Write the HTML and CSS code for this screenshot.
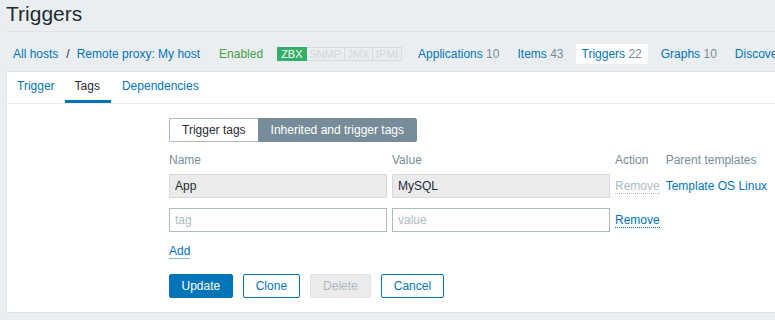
FILE: index.html
```html
<!DOCTYPE html>
<html lang="en">
<head>
  <meta charset="UTF-8">
  <title>Triggers</title>
  <link rel="stylesheet" href="styles.css">
</head>
<body>

  <header class="header-title">
    <h1>Triggers</h1>
  </header>

  <nav class="host-nav">
    <a href="#" class="link">All hosts</a>
    <span class="separator">/</span>
    <a href="#" class="link">Remote proxy: My host</a>
    <span class="status-green">Enabled</span>
    <span class="badges">
      <span class="badge badge-on">ZBX</span>
      <span class="badge">SNMP</span>
      <span class="badge">JMX</span>
      <span class="badge">IPMI</span>
    </span>
    <a href="#" class="nav-item">Applications <sup>10</sup></a>
    <a href="#" class="nav-item">Items <sup>43</sup></a>
    <a href="#" class="nav-item selected">Triggers <sup>22</sup></a>
    <a href="#" class="nav-item">Graphs <sup>10</sup></a>
    <a href="#" class="nav-item">Discovery rules <sup>3</sup></a>
  </nav>

  <div class="container">
    <ul class="tabs">
      <li><a href="#">Trigger</a></li>
      <li class="active"><a href="#">Tags</a></li>
      <li><a href="#">Dependencies</a></li>
    </ul>

    <div class="form">
      <div class="radio-segmented">
        <label>Trigger tags</label>
        <label class="checked">Inherited and trigger tags</label>
      </div>

      <div class="tags-table">
        <div class="th">Name</div>
        <div class="th">Value</div>
        <div class="th">Action</div>
        <div class="th parent">Parent templates</div>

        <input type="text" value="App" readonly>
        <input type="text" value="MySQL" readonly>
        <span class="btn-link disabled">Remove</span>
        <a href="#" class="link parent">Template OS Linux</a>

        <input type="text" placeholder="tag">
        <input type="text" placeholder="value">
        <span class="btn-link">Remove</span>
        <span></span>
      </div>

      <div class="add-row">
        <a href="#" class="add-link">Add</a>
      </div>

      <div class="buttons">
        <button class="btn-primary">Update</button>
        <button class="btn-alt">Clone</button>
        <button class="btn-alt" disabled>Delete</button>
        <button class="btn-alt">Cancel</button>
      </div>
    </div>
  </div>

</body>
</html>
```

FILE: styles.css
```css
body {
  margin: 0;
  font-family: "Liberation Sans", Arial, sans-serif;
  font-size: 12px;
  color: #1f2c33;
  background-color: #ebeef0;
  overflow: hidden;
  white-space: nowrap;
}
a {
  color: #0275b8;
  text-decoration: none;
}
.header-title {
  margin: 0 0 0 6px;
  padding: 1px 0 5px 0;
  border-bottom: 1px solid #dfe4e7;
}
.header-title h1 {
  margin: 0;
  font-size: 21px;
  font-weight: normal;
  line-height: 25px;
}
.host-nav {
  display: flex;
  align-items: center;
  height: 20px;
  padding: 12px 0 7px 13px;
  line-height: 20px;
}
.separator {
  margin: 0 7px 0 8px;
}
.status-green {
  margin-left: 19px;
  color: #429e47;
}
.badges {
  display: flex;
  margin: 0 4px 0 14px;
  font-size: 11px;
  line-height: 12px;
}
.badge {
  padding: 0 2.7px;
  color: #cfd7dc;
  border: 1px solid #d4dce0;
  border-left: none;
}
.badge-on {
  padding: 0 3px;
  color: #fff;
  background-color: #34af67;
  border: 1px solid #34af67;
}
.nav-item {
  padding: 0 6px;
  margin-left: 6px;
}
.nav-item sup {
  vertical-align: baseline;
  font-size: 12px;
  color: #768d99;
}
.nav-item.selected {
  background-color: #fff;
  margin-right: 1px;
}
.container {
  margin-left: 6px;
  background-color: #fff;
  border: 1px solid #dfe4e7;
  border-right: none;
  padding-bottom: 14px;
}
.tabs {
  display: flex;
  margin: 0;
  padding: 0;
  list-style: none;
  border-bottom: 1px solid #ebeef0;
}
.tabs li {
  padding: 0 10px;
  line-height: 28px;
  border-bottom: 3px solid transparent;
}
.tabs li.active {
  padding: 0 11px 0 10px;
  margin-right: 1px;
  border-bottom-color: #0275b8;
}
.tabs li.active a {
  color: #1f2c33;
}
.form {
  padding: 14px 0 0 162px;
}
.radio-segmented {
  display: flex;
}
.radio-segmented label {
  padding: 0 12px;
  line-height: 22px;
  border: 1px solid #acbbc2;
  background-color: #fff;
}
.radio-segmented label:first-child {
  border-radius: 2px 0 0 2px;
  border-right: none;
}
.radio-segmented label.checked {
  color: #fff;
  background-color: #768d99;
  border-color: #768d99;
  border-radius: 0 2px 2px 0;
}
.tags-table {
  display: grid;
  grid-template-columns: 218px 218px auto 1fr;
  column-gap: 5px;
  row-gap: 10px;
  align-items: center;
  margin-top: 10px;
}
.th {
  color: #768d99;
  line-height: 16px;
  margin-bottom: -4px;
}
.parent {
  margin-left: 1px;
}
.tags-table input {
  box-sizing: border-box;
  height: 24px;
  width: 218px;
  margin: 0;
  padding: 0 5px;
  font-family: inherit;
  font-size: 12px;
  color: #1f2c33;
  border: 1px solid #acbbc2;
  outline: none;
}
.tags-table input[readonly] {
  background-color: #ebebeb;
  border-color: #d3dbe0;
}
.tags-table input::placeholder {
  color: #acbbc2;
}
.btn-link {
  justify-self: start;
  color: #0275b8;
  line-height: 14px;
  border-bottom: 1px dotted #0275b8;
}
.btn-link.disabled {
  color: #acbbc2;
  border-bottom-color: #acbbc2;
}
.add-row {
  margin-top: 12px;
}
.add-link {
  display: inline-block;
  line-height: 14px;
  border-bottom: 1px solid rgba(2, 117, 184, 0.5);
}
.buttons {
  display: flex;
  gap: 10px;
  margin-top: 15px;
}
button {
  height: 24px;
  padding: 0 12px;
  font-family: inherit;
  font-size: 12px;
  border-radius: 2px;
  cursor: pointer;
}
.btn-primary {
  padding: 0 11.5px;
  color: #fff;
  background-color: #0275b8;
  border: 1px solid #0275b8;
}
.btn-alt {
  color: #0275b8;
  background-color: #fff;
  border: 1px solid #0275b8;
}
.btn-alt:disabled {
  color: #acbbc2;
  background-color: #ebebeb;
  border-color: #dfe4e7;
  cursor: default;
}
```
